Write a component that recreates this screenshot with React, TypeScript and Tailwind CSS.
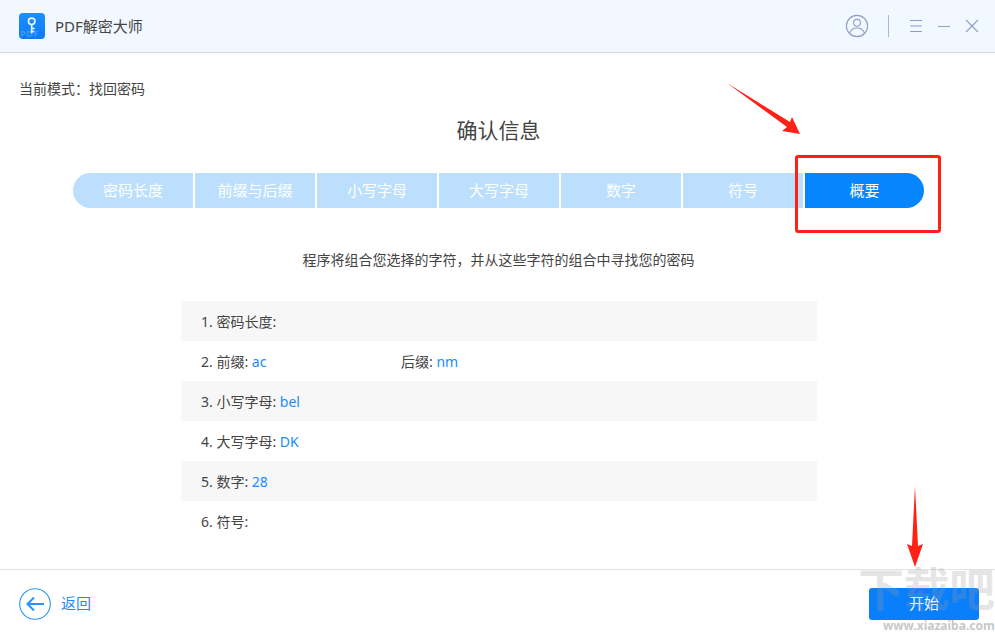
const steps = ["密码长度", "前缀与后缀", "小写字母", "大写字母", "数字", "符号", "概要"];

function Row({ shaded, children }: { shaded?: boolean; children: React.ReactNode }) {
  return (
    <div className={`flex h-10 items-center pl-5 text-[14px] text-[#444] ${shaded ? "bg-[#f7f7f7]" : "bg-white"}`}>
      {children}
    </div>
  );
}

const V = ({ children }: { children: React.ReactNode }) => <span className="text-[#1a8cff]">{children}</span>;

export default function App() {
  return (
    <div className="relative flex h-[633px] w-[995px] flex-col overflow-hidden bg-white font-['Noto_Sans','Noto_Sans_CJK_SC',sans-serif] text-[#444]">
      <header className="flex h-[53px] shrink-0 items-center border-b border-[#d5d5d5] bg-[#f2f8ff] pl-[19px] pr-[16px]">
        <div className="relative h-[26px] w-[26px] overflow-hidden rounded-[4px] bg-gradient-to-b from-[#1f8dfb] to-[#0a7cf8]">
          <svg viewBox="0 0 26 26" className="h-[26px] w-[26px]">
            <circle cx="12.7" cy="8.3" r="3.2" fill="none" stroke="#eaf5ff" strokeWidth="1.7" />
            <path d="M12.7 11.5v8.7M12.7 15.5h3M12.7 18.5h2.5" fill="none" stroke="#eaf5ff" strokeWidth="1.7" />
          </svg>
          <span className="absolute bottom-0 left-[1px] text-[9px] font-bold leading-[11px] tracking-[0.5px] text-white/20">PDF</span>
        </div>
        <span className="ml-[10px] text-[15px] leading-5 text-[#444]">PDF解密大师</span>
        <div className="ml-auto flex items-center">
          <svg viewBox="0 0 24 24" className="h-[24px] w-[24px]" fill="none" stroke="#8f9fc4" strokeWidth="1.1">
            <circle cx="12" cy="12" r="10.6" />
            <circle cx="12" cy="8.8" r="3.4" />
            <path d="M4.6 19c1.4-3.4 4-5 7.4-5s6 1.6 7.4 5" />
          </svg>
          <div className="ml-[19px] h-[22px] w-px bg-[#aab6d3]" />
          <svg viewBox="0 0 14 14" className="ml-[20px] h-[14px] w-[14px]" fill="none" stroke="#8f9fc4" strokeWidth="1">
            <path d="M1 1.5h12M1 7h12M1 12.5h12" />
          </svg>
          <svg viewBox="0 0 14 14" className="ml-[14px] h-[14px] w-[14px]" fill="none" stroke="#8f9fc4" strokeWidth="1">
            <path d="M1 7.5h12" />
          </svg>
          <svg viewBox="0 0 14 14" className="ml-[14px] h-[14px] w-[14px]" fill="none" stroke="#8f9fc4" strokeWidth="1.1">
            <path d="M1 1l12 12M13 1L1 13" />
          </svg>
        </div>
      </header>

      <main className="flex min-h-0 flex-1 flex-col">
        <div className="mt-[26px] h-5 pl-[19px] text-[14px] leading-5">当前模式：找回密码</div>
        <h1 className="mt-[15px] h-8 pl-[2px] text-center text-[21px] leading-8 text-[#444]">确认信息</h1>
        <div className="ml-[73px] mt-[27px] flex h-[35px] gap-[2px]">
          {steps.map((s, i) => (
            <div
              key={s}
              className={`flex items-center justify-center text-[15px] text-white ${
                i === 6 ? "w-[119px] rounded-r-[18px] bg-[#0685fd]" : "w-[120px] bg-[#bcdffd]"
              } ${i === 0 ? "w-[119px] rounded-l-[18px]" : ""}`}
            >
              {s}
            </div>
          ))}
        </div>
        <p className="mt-[42px] h-5 pl-[2px] text-center text-[14px] leading-5 text-[#444]">
          程序将组合您选择的字符，并从这些字符的组合中寻找您的密码
        </p>
        <div className="ml-[181px] mt-[31px] w-[636px]">
          <Row shaded>1. 密码长度:</Row>
          <Row>
            <span className="w-[200px]">2. 前缀: <V>ac</V></span>
            <span>后缀: <V>nm</V></span>
          </Row>
          <Row shaded>3. 小写字母: <V>&nbsp;bel</V></Row>
          <Row>4. 大写字母: <V>&nbsp;DK</V></Row>
          <Row shaded>5. 数字: <V>&nbsp;28</V></Row>
          <Row>6. 符号:</Row>
        </div>
      </main>

      <footer className="flex h-[64px] shrink-0 items-center border-t border-[#e2e2e2] pl-[19px] pr-[16px] pt-1">
        <svg viewBox="0 0 32 32" className="h-8 w-8" fill="none" stroke="#2a93fb">
          <circle cx="16" cy="16" r="15.3" strokeWidth="1.1" />
          <path d="M25 16H9M15 9.5L8.5 16l6.5 6.5" strokeWidth="2" />
        </svg>
        <span className="ml-[10px] text-[15px] text-[#1a8cff]">返回</span>
        <button className="ml-auto h-8 w-[110px] rounded-[3px] bg-[#0a7ffb] text-[15px] text-white">开始</button>
      </footer>

      {/* Annotation overlays */}
      <div className="pointer-events-none absolute left-[795px] top-[155px] h-[78px] w-[146px] rounded-[3px] border-[3px] border-[#ff2116]" />
      <svg className="pointer-events-none absolute left-[720px] top-[78px]" width="90" height="62" viewBox="0 0 90 62">
        <path d="M7 5L70 44L72 39L80 56L62 53L67 49Z" fill="#ff2116" />
      </svg>
      <svg className="pointer-events-none absolute left-[900px] top-[484px]" width="30" height="84" viewBox="0 0 30 84">
        <path d="M15 2L18 62L23 60L15 83L7 60L12 62Z" fill="#ff2116" />
      </svg>

      {/* Watermark */}
      <div className="pointer-events-none absolute left-[858px] top-[558px] whitespace-nowrap text-[46px] font-bold leading-[60px] tracking-[-0.5px] text-[#9a9a9a]/25">
        下载吧
      </div>
      <div className="pointer-events-none absolute left-[883px] top-[619px] whitespace-nowrap text-[12px] font-bold leading-[14px] text-[#c8c8c8]">
        www.xiazaiba.com
      </div>
    </div>
  );
}
